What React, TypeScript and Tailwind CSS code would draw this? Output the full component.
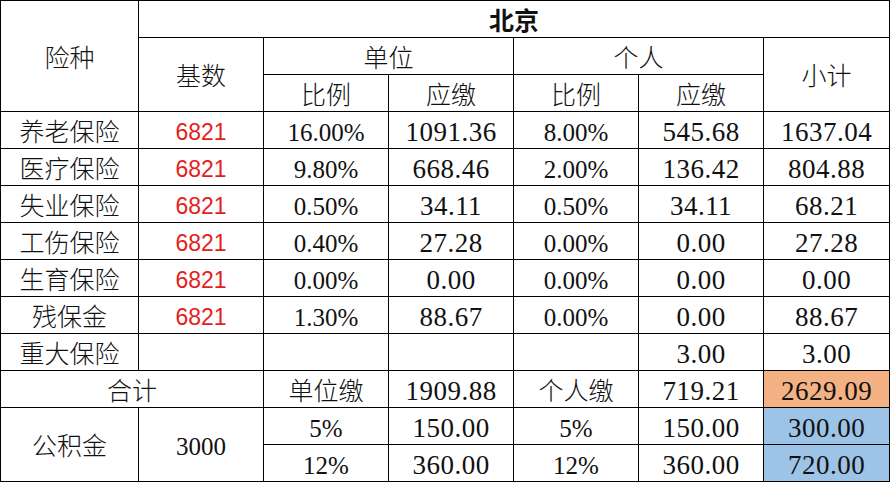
import React from "react";

const CN = "font-['Liberation_Serif','Noto_Sans_CJK_SC',serif] text-[25px] font-light";
const NUM = "font-['Liberation_Serif','Noto_Sans_CJK_SC',serif] text-[27px] tracking-[0.5px]";
const PCT = "font-['Liberation_Serif','Noto_Sans_CJK_SC',serif] text-[25px]";
const SMALL = "font-['Liberation_Serif','Noto_Sans_CJK_SC',serif] text-[25px]";
const RED = "font-['Liberation_Sans',sans-serif] text-[23px] text-[#e41e1e]";

const cell = "border border-black text-center align-middle p-0 pt-[4px] leading-none";

type Row = {
  name: string;
  base: string;
  unitRate: string;
  unitPay: string;
  selfRate: string;
  selfPay: string;
  total: string;
};

const rows: Row[] = [
  { name: "养老保险", base: "6821", unitRate: "16.00%", unitPay: "1091.36", selfRate: "8.00%", selfPay: "545.68", total: "1637.04" },
  { name: "医疗保险", base: "6821", unitRate: "9.80%", unitPay: "668.46", selfRate: "2.00%", selfPay: "136.42", total: "804.88" },
  { name: "失业保险", base: "6821", unitRate: "0.50%", unitPay: "34.11", selfRate: "0.50%", selfPay: "34.11", total: "68.21" },
  { name: "工伤保险", base: "6821", unitRate: "0.40%", unitPay: "27.28", selfRate: "0.00%", selfPay: "0.00", total: "27.28" },
  { name: "生育保险", base: "6821", unitRate: "0.00%", unitPay: "0.00", selfRate: "0.00%", selfPay: "0.00", total: "0.00" },
  { name: "残保金", base: "6821", unitRate: "1.30%", unitPay: "88.67", selfRate: "0.00%", selfPay: "0.00", total: "88.67" },
  { name: "重大保险", base: "", unitRate: "", unitPay: "", selfRate: "", selfPay: "3.00", total: "3.00" },
];

export default function App() {
  return (
    <div className="bg-white w-[890px] h-[483px] text-[#111]">
      <table className="table-fixed border-collapse w-[889px]">
        <colgroup>
          <col className="w-[138px]" />
          <col className="w-[125px]" />
          <col className="w-[125px]" />
          <col className="w-[125px]" />
          <col className="w-[125px]" />
          <col className="w-[125px]" />
          <col className="w-[126px]" />
        </colgroup>
        <tbody>
          <tr className="h-[37px]">
            <td rowSpan={3} className={`${cell} ${CN}`}>险种</td>
            <td colSpan={6} className={`${cell} ${CN} !font-bold`}>北京</td>
          </tr>
          <tr className="h-[37px]">
            <td rowSpan={2} className={`${cell} ${CN}`}>基数</td>
            <td colSpan={2} className={`${cell} ${CN}`}>单位</td>
            <td colSpan={2} className={`${cell} ${CN}`}>个人</td>
            <td rowSpan={2} className={`${cell} ${CN}`}>小计</td>
          </tr>
          <tr className="h-[37px]">
            <td className={`${cell} ${CN}`}>比例</td>
            <td className={`${cell} ${CN}`}>应缴</td>
            <td className={`${cell} ${CN}`}>比例</td>
            <td className={`${cell} ${CN}`}>应缴</td>
          </tr>
          {rows.map((r) => (
            <tr key={r.name} className="h-[37px]">
              <td className={`${cell} ${CN}`}>{r.name}</td>
              <td className={`${cell} ${RED}`}>{r.base}</td>
              <td className={`${cell} ${PCT}`}>{r.unitRate}</td>
              <td className={`${cell} ${NUM}`}>{r.unitPay}</td>
              <td className={`${cell} ${PCT}`}>{r.selfRate}</td>
              <td className={`${cell} ${NUM}`}>{r.selfPay}</td>
              <td className={`${cell} ${NUM}`}>{r.total}</td>
            </tr>
          ))}
          <tr className="h-[37px]">
            <td colSpan={2} className={`${cell} ${CN}`}>合计</td>
            <td className={`${cell} ${CN}`}>单位缴</td>
            <td className={`${cell} ${NUM}`}>1909.88</td>
            <td className={`${cell} ${CN}`}>个人缴</td>
            <td className={`${cell} ${NUM}`}>719.21</td>
            <td className={`${cell} ${NUM} bg-[#f4b183]`}>2629.09</td>
          </tr>
          <tr className="h-[37px]">
            <td rowSpan={2} className={`${cell} ${CN}`}>公积金</td>
            <td rowSpan={2} className={`${cell} ${PCT}`}>3000</td>
            <td className={`${cell} ${SMALL}`}>5%</td>
            <td className={`${cell} ${NUM}`}>150.00</td>
            <td className={`${cell} ${SMALL}`}>5%</td>
            <td className={`${cell} ${NUM}`}>150.00</td>
            <td className={`${cell} ${NUM} bg-[#9dc3e6]`}>300.00</td>
          </tr>
          <tr className="h-[37px]">
            <td className={`${cell} ${SMALL}`}>12%</td>
            <td className={`${cell} ${NUM}`}>360.00</td>
            <td className={`${cell} ${SMALL}`}>12%</td>
            <td className={`${cell} ${NUM}`}>360.00</td>
            <td className={`${cell} ${NUM} bg-[#9dc3e6]`}>720.00</td>
          </tr>
        </tbody>
      </table>
    </div>
  );
}
